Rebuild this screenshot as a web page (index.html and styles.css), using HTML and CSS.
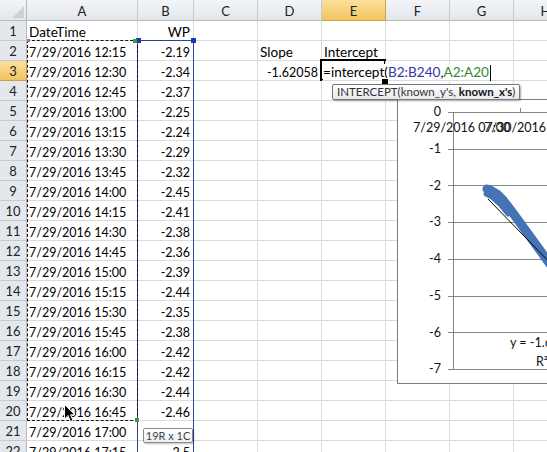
FILE: index.html
```html
<!DOCTYPE html>
<html>
<head>
<meta charset="utf-8">
<link rel="stylesheet" href="styles.css">
</head>
<body>
<div class="sheet">
  <div class="row hdr">
    <div class="cell rh corner"><span class="tri"></span></div>
    <div class="cell ca ch">A</div>
    <div class="cell cb ch">B</div>
    <div class="cell cc ch">C</div>
    <div class="cell cd ch">D</div>
    <div class="cell ce ch on">E</div>
    <div class="cell cf ch">F</div>
    <div class="cell cg ch">G</div>
    <div class="cell chh ch">H</div>
  </div>
  <div class="row"><div class="cell rh">1</div><div class="cell ca w">DateTime</div><div class="cell cb num w">WP</div><div class="cell cc"></div><div class="cell cd"></div><div class="cell ce"></div><div class="cell cf"></div><div class="cell cg"></div><div class="cell chh"></div></div>
  <div class="row"><div class="cell rh">2</div><div class="cell ca">7/29/2016 12:15</div><div class="cell cb num">-2.19</div><div class="cell cc"></div><div class="cell cd w">Slope</div><div class="cell ce w">Intercept</div><div class="cell cf"></div><div class="cell cg"></div><div class="cell chh"></div></div>
  <div class="row"><div class="cell rh on">3</div><div class="cell ca">7/29/2016 12:30</div><div class="cell cb num">-2.34</div><div class="cell cc"></div><div class="cell cd num">-1.62058</div><div class="cell ce edit-cell w"><span class="edit">=intercept(<span class="ref-b">B2:B240</span>,<span class="ref-a">A2:A20</span><span class="caret"></span></span></div><div class="cell cf"></div><div class="cell cg"></div><div class="cell chh"></div></div>
  <div class="row"><div class="cell rh">4</div><div class="cell ca">7/29/2016 12:45</div><div class="cell cb num">-2.37</div><div class="cell cc"></div><div class="cell cd"></div><div class="cell ce"></div><div class="cell cf"></div><div class="cell cg"></div><div class="cell chh"></div></div>
  <div class="row"><div class="cell rh">5</div><div class="cell ca">7/29/2016 13:00</div><div class="cell cb num">-2.25</div><div class="cell cc"></div><div class="cell cd"></div><div class="cell ce"></div><div class="cell cf"></div><div class="cell cg"></div><div class="cell chh"></div></div>
  <div class="row"><div class="cell rh">6</div><div class="cell ca">7/29/2016 13:15</div><div class="cell cb num">-2.24</div><div class="cell cc"></div><div class="cell cd"></div><div class="cell ce"></div><div class="cell cf"></div><div class="cell cg"></div><div class="cell chh"></div></div>
  <div class="row"><div class="cell rh">7</div><div class="cell ca">7/29/2016 13:30</div><div class="cell cb num">-2.29</div><div class="cell cc"></div><div class="cell cd"></div><div class="cell ce"></div><div class="cell cf"></div><div class="cell cg"></div><div class="cell chh"></div></div>
  <div class="row"><div class="cell rh">8</div><div class="cell ca">7/29/2016 13:45</div><div class="cell cb num">-2.32</div><div class="cell cc"></div><div class="cell cd"></div><div class="cell ce"></div><div class="cell cf"></div><div class="cell cg"></div><div class="cell chh"></div></div>
  <div class="row"><div class="cell rh">9</div><div class="cell ca">7/29/2016 14:00</div><div class="cell cb num">-2.45</div><div class="cell cc"></div><div class="cell cd"></div><div class="cell ce"></div><div class="cell cf"></div><div class="cell cg"></div><div class="cell chh"></div></div>
  <div class="row"><div class="cell rh">10</div><div class="cell ca">7/29/2016 14:15</div><div class="cell cb num">-2.41</div><div class="cell cc"></div><div class="cell cd"></div><div class="cell ce"></div><div class="cell cf"></div><div class="cell cg"></div><div class="cell chh"></div></div>
  <div class="row"><div class="cell rh">11</div><div class="cell ca">7/29/2016 14:30</div><div class="cell cb num">-2.38</div><div class="cell cc"></div><div class="cell cd"></div><div class="cell ce"></div><div class="cell cf"></div><div class="cell cg"></div><div class="cell chh"></div></div>
  <div class="row"><div class="cell rh">12</div><div class="cell ca">7/29/2016 14:45</div><div class="cell cb num">-2.36</div><div class="cell cc"></div><div class="cell cd"></div><div class="cell ce"></div><div class="cell cf"></div><div class="cell cg"></div><div class="cell chh"></div></div>
  <div class="row"><div class="cell rh">13</div><div class="cell ca">7/29/2016 15:00</div><div class="cell cb num">-2.39</div><div class="cell cc"></div><div class="cell cd"></div><div class="cell ce"></div><div class="cell cf"></div><div class="cell cg"></div><div class="cell chh"></div></div>
  <div class="row"><div class="cell rh">14</div><div class="cell ca">7/29/2016 15:15</div><div class="cell cb num">-2.44</div><div class="cell cc"></div><div class="cell cd"></div><div class="cell ce"></div><div class="cell cf"></div><div class="cell cg"></div><div class="cell chh"></div></div>
  <div class="row"><div class="cell rh">15</div><div class="cell ca">7/29/2016 15:30</div><div class="cell cb num">-2.35</div><div class="cell cc"></div><div class="cell cd"></div><div class="cell ce"></div><div class="cell cf"></div><div class="cell cg"></div><div class="cell chh"></div></div>
  <div class="row"><div class="cell rh">16</div><div class="cell ca">7/29/2016 15:45</div><div class="cell cb num">-2.38</div><div class="cell cc"></div><div class="cell cd"></div><div class="cell ce"></div><div class="cell cf"></div><div class="cell cg"></div><div class="cell chh"></div></div>
  <div class="row"><div class="cell rh">17</div><div class="cell ca">7/29/2016 16:00</div><div class="cell cb num">-2.42</div><div class="cell cc"></div><div class="cell cd"></div><div class="cell ce"></div><div class="cell cf"></div><div class="cell cg"></div><div class="cell chh"></div></div>
  <div class="row"><div class="cell rh">18</div><div class="cell ca">7/29/2016 16:15</div><div class="cell cb num">-2.42</div><div class="cell cc"></div><div class="cell cd"></div><div class="cell ce"></div><div class="cell cf"></div><div class="cell cg"></div><div class="cell chh"></div></div>
  <div class="row"><div class="cell rh">19</div><div class="cell ca">7/29/2016 16:30</div><div class="cell cb num">-2.44</div><div class="cell cc"></div><div class="cell cd"></div><div class="cell ce"></div><div class="cell cf"></div><div class="cell cg"></div><div class="cell chh"></div></div>
  <div class="row"><div class="cell rh">20</div><div class="cell ca">7/29/2016 16:45</div><div class="cell cb num">-2.46</div><div class="cell cc"></div><div class="cell cd"></div><div class="cell ce"></div><div class="cell cf"></div><div class="cell cg"></div><div class="cell chh"></div></div>
  <div class="row"><div class="cell rh">21</div><div class="cell ca">7/29/2016 17:00</div><div class="cell cb num"></div><div class="cell cc"></div><div class="cell cd"></div><div class="cell ce"></div><div class="cell cf"></div><div class="cell cg"></div><div class="cell chh"></div></div>
  <div class="row"><div class="cell rh">22</div><div class="cell ca">7/29/2016 17:15</div><div class="cell cb num">-2.5</div><div class="cell cc"></div><div class="cell cd"></div><div class="cell ce"></div><div class="cell cf"></div><div class="cell cg"></div><div class="cell chh"></div></div>

  <div class="chart">
    <svg class="chart-svg" width="160" height="283" viewBox="398 100 160 283">
      <g stroke="#868686" stroke-width="1" fill="none">
        <line x1="448" y1="112.5" x2="560" y2="112.5"/>
        <line x1="448" y1="149.5" x2="560" y2="149.5"/>
        <line x1="448" y1="185.5" x2="560" y2="185.5"/>
        <line x1="448" y1="222.5" x2="560" y2="222.5"/>
        <line x1="448" y1="259.5" x2="560" y2="259.5"/>
        <line x1="448" y1="296.5" x2="560" y2="296.5"/>
        <line x1="448" y1="332.5" x2="560" y2="332.5"/>
        <line x1="448" y1="369.5" x2="560" y2="369.5"/>
        <line x1="453.5" y1="112" x2="453.5" y2="370"/>
        <line x1="520.5" y1="108" x2="520.5" y2="112"/>
      </g>
      <g class="axis-txt" text-anchor="end">
        <text x="441" y="116">0</text>
        <text x="441" y="153">-1</text>
        <text x="441" y="190">-2</text>
        <text x="441" y="226">-3</text>
        <text x="441" y="263">-4</text>
        <text x="441" y="300">-5</text>
        <text x="441" y="337">-6</text>
        <text x="441" y="373">-7</text>
      </g>
      <g class="axis-txt">
        <text x="413" y="132">7/29/2016 07:00</text>
        <text x="484" y="132">7/30/2016 07:00</text>
      </g>
      <polyline points="487,189 492,191 497,194 503,200 510,209 518,220 526,231 534,242 542,253 552,267" fill="none" stroke="#4574b6" stroke-width="9" stroke-linejoin="round" stroke-linecap="round"/>
      <polyline points="486,194 492,197 500,204 508,214" fill="none" stroke="#4574b6" stroke-width="5" stroke-linejoin="round" stroke-linecap="round"/>
      <line x1="488" y1="199" x2="560" y2="273" stroke="#000" stroke-width="1"/>
      <g class="axis-txt">
        <text x="510" y="347">y = -1.6206x + 67973</text>
        <text x="536" y="366">R² = 0.9403</text>
      </g>
    </svg>
  </div>

  <div class="sel-b"></div>
  <div class="sel-a"></div>
  <div class="h-blue h1"></div>
  <div class="h-blue h2"></div>
  <div class="h-green g1"></div>
  <div class="h-green g2"></div>
  <div class="h-pink p1"></div>
  <div class="active"></div>
  <div class="fill-handle"></div>

  <div class="tip-fn">INTERCEPT(known_y's, <b>known_x's</b>)</div>
  <div class="tip-size">19R x 1C</div>

  <svg class="cursor" width="12" height="19" viewBox="0 0 12 19">
    <path d="M0.5,0.5 L0.5,15 L4,11.5 L6.5,17.5 L9,16.5 L6.5,10.8 L11,10.8 Z" fill="#000" stroke="#fff" stroke-width="1"/>
  </svg>
</div>
</body>
</html>
```

FILE: styles.css
```css
html, body {
  margin: 0;
  padding: 0;
  width: 547px;
  height: 452px;
  overflow: hidden;
  background: #fff;
}

.sheet {
  position: relative;
  width: 547px;
  height: 452px;
  overflow: hidden;
  font-family: Lato, "Liberation Sans", sans-serif;
  font-size: 12.5px;
  color: #000;
}

.row {
  display: flex;
  height: 20px;
}

.row.hdr {
  height: 21px;
}

.cell {
  flex: none;
  box-sizing: border-box;
  height: 100%;
  border-right: 1px solid #d9dadb;
  border-bottom: 1px solid #d9dadb;
  padding: 3px 2px 0 2px;
  line-height: 17px;
  white-space: nowrap;
}

.w {
  font-size: 13.6px;
}

.rh { width: 27px; }
.ca { width: 111px; }
.cb { width: 56px; }
.cc, .cd, .ce, .cf, .cg, .chh { width: 64px; }

.num {
  text-align: right;
  padding-right: 3px;
}

.rh {
  background: #e4e8ed;
  border-right-color: #b5bac1;
  border-bottom-color: #c6cad0;
  text-align: center;
  padding: 2px 0 0 0;
  color: #222;
  font-size: 13px;
}

.ch {
  background: linear-gradient(#f3f5f8, #e2e6eb);
  border-right-color: #c6cad0;
  border-bottom-color: #b5bac1;
  text-align: center;
  color: #222;
  font-size: 13px;
}

.ch.on, .rh.on {
  background: linear-gradient(#fbe19d, #f2c35f);
  border-right-color: #c9a24e;
  border-bottom-color: #c9a24e;
}

.corner {
  position: relative;
  background: linear-gradient(#f3f5f8, #e2e6eb);
  border-bottom-color: #b5bac1;
}

.tri {
  position: absolute;
  right: 2px;
  bottom: 2px;
  width: 0;
  height: 0;
  border-left: 12px solid transparent;
  border-bottom: 12px solid #cdd1d6;
}

.edit-cell {
  position: relative;
  z-index: 6;
  padding-left: 1px;
}

.edit {
  position: relative;
  background: #fff;
  padding-right: 1px;
}

.ref-b { color: #3434a8; }
.ref-a { color: #2f8b2f; }

.caret {
  display: inline-block;
  width: 1px;
  height: 16px;
  background: #000;
  vertical-align: -4px;
  margin-left: 1px;
}

.chart {
  position: absolute;
  left: 397px;
  top: 99px;
  width: 200px;
  height: 285px;
  box-sizing: border-box;
  border: 1px solid #7c7c7c;
  background: #fff;
  z-index: 2;
}

.chart-svg {
  display: block;
}

.axis-txt {
  font-family: Lato, "Liberation Sans", sans-serif;
  font-size: 12.5px;
  fill: #111;
}

.sel-b {
  position: absolute;
  left: 137px;
  top: 40px;
  width: 57px;
  height: 440px;
  box-sizing: border-box;
  border: 1px solid #2b3f9e;
  z-index: 5;
}

.sel-a {
  position: absolute;
  left: 27px;
  top: 40px;
  width: 111px;
  height: 381px;
  box-sizing: border-box;
  border: 1px dashed #111;
  z-index: 6;
}

.h-blue {
  position: absolute;
  width: 5px;
  height: 5px;
  background: #1f3aa6;
  z-index: 7;
}
.h1 { left: 136px; top: 38px; }
.h2 { left: 191px; top: 38px; }

.h-green {
  position: absolute;
  width: 4px;
  height: 4px;
  background: #3c9a3c;
  z-index: 7;
}
.g1 { left: 133px; top: 39px; }
.g2 { left: 135px; top: 418px; }

.h-pink {
  position: absolute;
  width: 3px;
  height: 3px;
  background: #b35fb0;
  z-index: 7;
  left: 27px;
  top: 39px;
}

.active {
  position: absolute;
  left: 320px;
  top: 59px;
  width: 66px;
  height: 22px;
  box-sizing: border-box;
  border: 2px solid #000;
  z-index: 5;
}

.fill-handle {
  position: absolute;
  left: 381px;
  top: 78px;
  width: 6px;
  height: 5px;
  background: #000;
  border: 1px solid #fff;
  z-index: 7;
}

.tip-fn {
  position: absolute;
  left: 332px;
  top: 84px;
  height: 16px;
  box-sizing: border-box;
  padding: 0 4px;
  border: 1px solid #767676;
  border-radius: 2px;
  background: linear-gradient(#ffffff, #e6e7f0);
  box-shadow: 1px 1px 2px rgba(0, 0, 0, 0.35);
  font-family: Lato, "Liberation Sans", sans-serif;
  font-size: 11.5px;
  line-height: 14px;
  color: #333;
  white-space: nowrap;
  z-index: 8;
}

.tip-fn b {
  color: #111;
}

.tip-size {
  position: absolute;
  left: 143px;
  top: 428px;
  width: 50px;
  height: 15px;
  box-sizing: border-box;
  border: 1px solid #8a8a8a;
  border-radius: 2px;
  background: linear-gradient(#ffffff, #eceef2);
  box-shadow: 1px 1px 2px rgba(0, 0, 0, 0.25);
  font-family: Lato, "Liberation Sans", sans-serif;
  font-size: 11px;
  line-height: 13px;
  text-align: center;
  color: #444;
  z-index: 8;
}

.cursor {
  position: absolute;
  left: 64px;
  top: 404px;
  z-index: 9;
}
```
